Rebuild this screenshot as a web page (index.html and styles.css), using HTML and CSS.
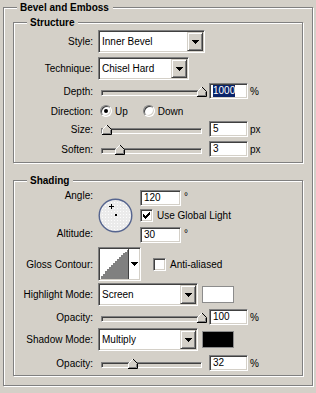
FILE: index.html
```html
<!DOCTYPE html>
<html lang="en">
<head>
    <meta charset="UTF-8">
    <title>Bevel and Emboss</title>
    <link rel="stylesheet" href="styles.css">
</head>
<body>
    <div class="group outer">
        <div class="group-title">Bevel and Emboss</div>

        <div class="group structure">
            <div class="group-title">Structure</div>

            <div class="row style-row">
                <span class="label">Style:</span>
                <div class="combo style-combo">
                    <span class="combo-text">Inner Bevel</span>
                    <span class="combo-btn"><svg width="7" height="4" viewBox="0 0 7 4" shape-rendering="crispEdges"><path d="M0 0h7v1h-1v1h-1v1h-1v1h-1v-1h-1v-1h-1v-1h-1z"/></svg></span>
                </div>
            </div>

            <div class="row technique-row">
                <span class="label">Technique:</span>
                <div class="combo technique-combo">
                    <span class="combo-text">Chisel Hard</span>
                    <span class="combo-btn"><svg width="7" height="4" viewBox="0 0 7 4" shape-rendering="crispEdges"><path d="M0 0h7v1h-1v1h-1v1h-1v1h-1v-1h-1v-1h-1v-1h-1z"/></svg></span>
                </div>
            </div>

            <div class="row slider-row depth-row">
                <span class="label">Depth:</span>
                <div class="slider">
                    <div class="track"></div>
                    <span class="thumb" style="left: 99px"><svg width="10" height="11" viewBox="0 0 10 11"><path d="M0.5 10.5V5.5L5 1L9.5 5.5V10.5Z" fill="#d4d0c8"/><path d="M0.5 10V5.5L5 1" stroke="#fff" fill="none"/><path d="M5 1L9.5 5.5V10.5H0" stroke="#000" fill="none"/><path d="M8.5 6V9.5H1" stroke="#808080" fill="none"/></svg></span>
                </div>
                <div class="field"><span class="selected">1000</span></div>
                <span class="unit">%</span>
            </div>

            <div class="row direction-row">
                <span class="label">Direction:</span>
                <span class="radio checked"></span>
                <span class="radio-text">Up</span>
                <span class="radio down"></span>
                <span class="radio-text">Down</span>
            </div>

            <div class="row slider-row size-row">
                <span class="label">Size:</span>
                <div class="slider">
                    <div class="track"></div>
                    <span class="thumb" style="left: 4px"><svg width="10" height="11" viewBox="0 0 10 11"><path d="M0.5 10.5V5.5L5 1L9.5 5.5V10.5Z" fill="#d4d0c8"/><path d="M0.5 10V5.5L5 1" stroke="#fff" fill="none"/><path d="M5 1L9.5 5.5V10.5H0" stroke="#000" fill="none"/><path d="M8.5 6V9.5H1" stroke="#808080" fill="none"/></svg></span>
                </div>
                <div class="field">5</div>
                <span class="unit">px</span>
            </div>

            <div class="row slider-row soften-row">
                <span class="label">Soften:</span>
                <div class="slider">
                    <div class="track"></div>
                    <span class="thumb" style="left: 17px"><svg width="10" height="11" viewBox="0 0 10 11"><path d="M0.5 10.5V5.5L5 1L9.5 5.5V10.5Z" fill="#d4d0c8"/><path d="M0.5 10V5.5L5 1" stroke="#fff" fill="none"/><path d="M5 1L9.5 5.5V10.5H0" stroke="#000" fill="none"/><path d="M8.5 6V9.5H1" stroke="#808080" fill="none"/></svg></span>
                </div>
                <div class="field">3</div>
                <span class="unit">px</span>
            </div>
        </div>

        <div class="group shading">
            <div class="group-title">Shading</div>

            <div class="angle-block">
                <div class="angle-labels">
                    <span class="label">Angle:</span>
                    <span class="label altitude-label">Altitude:</span>
                </div>
                <div class="dial">
                    <svg width="35" height="35" viewBox="0 0 35 35">
                        <defs>
                            <pattern id="dots" width="3" height="3" patternUnits="userSpaceOnUse">
                                <rect width="3" height="3" fill="#ebebeb"/>
                                <rect x="1" y="1" width="1" height="1" fill="#fdfdfd"/>
                            </pattern>
                        </defs>
                        <circle cx="17.5" cy="17.5" r="16.3" fill="url(#dots)" stroke="#56658f" stroke-width="1.4"/>
                        <path d="M11 8.5h5M13.5 6v5" stroke="#000" stroke-width="1" shape-rendering="crispEdges"/>
                        <rect x="17" y="16" width="2" height="2" fill="#000"/>
                    </svg>
                </div>
                <div class="angle-controls">
                    <div class="field-line">
                        <div class="field angle-field">120</div>
                        <span class="degree">°</span>
                    </div>
                    <div class="check-line global-light">
                        <span class="checkbox"><svg width="7" height="7" viewBox="0 0 7 7" shape-rendering="crispEdges"><path d="M6 0h1v1h-1zM5 1h2v1h-2zM0 2h1v1h-1zM4 2h3v1h-3zM0 3h2v1h-2zM3 3h3v1h-3zM0 4h5v1h-5zM1 5h3v1h-3zM2 6h1v1h-1z"/></svg></span>
                        <span class="check-text">Use Global Light</span>
                    </div>
                    <div class="field-line altitude-line">
                        <div class="field angle-field">30</div>
                        <span class="degree">°</span>
                    </div>
                </div>
            </div>

            <div class="row contour-row">
                <span class="label">Gloss Contour:</span>
                <div class="contour">
                    <span class="contour-preview"><svg width="28" height="30" viewBox="0 0 28 30" shape-rendering="crispEdges"><path d="M1 30V27H3V25H5V22H7V20H9V18H11V16H13V14H15V12H17V10H19V8H21V6H23V4H25V3H27V1H28V30Z" fill="#808080"/></svg></span>
                    <span class="contour-arrow"><svg width="7" height="4" viewBox="0 0 7 4" shape-rendering="crispEdges"><path d="M0 0h7v1h-1v1h-1v1h-1v1h-1v-1h-1v-1h-1v-1h-1z"/></svg></span>
                </div>
                <span class="checkbox anti-box"></span>
                <span class="check-text">Anti-aliased</span>
            </div>

            <div class="row highlight-row">
                <span class="label">Highlight Mode:</span>
                <div class="combo mode-combo">
                    <span class="combo-text">Screen</span>
                    <span class="combo-btn"><svg width="7" height="4" viewBox="0 0 7 4" shape-rendering="crispEdges"><path d="M0 0h7v1h-1v1h-1v1h-1v1h-1v-1h-1v-1h-1v-1h-1z"/></svg></span>
                </div>
                <span class="swatch white"></span>
            </div>

            <div class="row slider-row opacity-row">
                <span class="label">Opacity:</span>
                <div class="slider">
                    <div class="track"></div>
                    <span class="thumb" style="left: 99px"><svg width="10" height="11" viewBox="0 0 10 11"><path d="M0.5 10.5V5.5L5 1L9.5 5.5V10.5Z" fill="#d4d0c8"/><path d="M0.5 10V5.5L5 1" stroke="#fff" fill="none"/><path d="M5 1L9.5 5.5V10.5H0" stroke="#000" fill="none"/><path d="M8.5 6V9.5H1" stroke="#808080" fill="none"/></svg></span>
                </div>
                <div class="field">100</div>
                <span class="unit">%</span>
            </div>

            <div class="row shadow-row">
                <span class="label">Shadow Mode:</span>
                <div class="combo mode-combo">
                    <span class="combo-text">Multiply</span>
                    <span class="combo-btn"><svg width="7" height="4" viewBox="0 0 7 4" shape-rendering="crispEdges"><path d="M0 0h7v1h-1v1h-1v1h-1v1h-1v-1h-1v-1h-1v-1h-1z"/></svg></span>
                </div>
                <span class="swatch black"></span>
            </div>

            <div class="row slider-row opacity-row last">
                <span class="label">Opacity:</span>
                <div class="slider">
                    <div class="track"></div>
                    <span class="thumb" style="left: 30px"><svg width="10" height="11" viewBox="0 0 10 11"><path d="M0.5 10.5V5.5L5 1L9.5 5.5V10.5Z" fill="#d4d0c8"/><path d="M0.5 10V5.5L5 1" stroke="#fff" fill="none"/><path d="M5 1L9.5 5.5V10.5H0" stroke="#000" fill="none"/><path d="M8.5 6V9.5H1" stroke="#808080" fill="none"/></svg></span>
                </div>
                <div class="field">32</div>
                <span class="unit">%</span>
            </div>
        </div>
    </div>
</body>
</html>
```

FILE: styles.css
```css
* {
    box-sizing: border-box;
}

body {
    margin: 0;
    width: 316px;
    height: 393px;
    overflow: hidden;
    background-color: #d4d0c8;
    color: #000;
    font-family: "Liberation Sans", Arial, sans-serif;
    font-size: 10px;
}

/* etched group boxes */
.group {
    border: 1px solid #808080;
    box-shadow: inset 1px 1px 0 #fff, 1px 1px 0 #fff;
}

.group-title {
    width: fit-content;
    height: 12px;
    margin: -6px 0 0 13px;
    padding: 0 4px 0 3px;
    background-color: #d4d0c8;
    font-weight: bold;
    line-height: 12px;
}

.outer {
    width: 310px;
    margin: 7px 0 0 3px;
    padding-bottom: 9px;
}

.structure,
.shading {
    margin: 8px 9px 0 9px;
}

.structure {
    padding-bottom: 5px;
}

.shading {
    margin-top: 17px;
    padding-bottom: 4px;
}

/* rows */
.row {
    display: flex;
    align-items: center;
}

.label {
    flex: none;
    width: 79px;
    text-align: right;
}

.style-row {
    height: 23px;
    margin-top: 1px;
}

.technique-row {
    height: 23px;
    margin-top: 4px;
}

.slider-row {
    height: 16px;
}

.depth-row {
    margin-top: 3px;
}

.direction-row {
    height: 14px;
    margin-top: 5px;
}

.size-row {
    margin-top: 3px;
}

.soften-row {
    margin-top: 4px;
}

/* sunken edge shared by inputs */
.combo,
.field,
.track,
.checkbox,
.contour {
    border: 1px solid;
    border-color: #808080 #fff #fff #808080;
    box-shadow: inset 1px 1px 0 #404040, inset -1px -1px 0 #d4d0c8;
}

.combo {
    display: flex;
    align-items: center;
    flex: none;
    height: 23px;
    margin-left: 5px;
    padding: 1px;
    background-color: #fff;
}

.style-combo {
    width: 107px;
}

.technique-combo {
    width: 91px;
}

.mode-combo {
    width: 100px;
}

.combo-text {
    flex: 1;
    padding-left: 2px;
}

.combo-btn {
    display: flex;
    align-items: center;
    justify-content: center;
    width: 16px;
    height: 100%;
    border: 1px solid;
    border-color: #d4d0c8 #404040 #404040 #d4d0c8;
    box-shadow: inset 1px 1px 0 #fff, inset -1px -1px 0 #808080;
    background-color: #d4d0c8;
}

.combo-btn svg,
.contour-arrow svg {
    display: block;
}

/* sliders */
.slider {
    position: relative;
    flex: none;
    width: 110px;
    height: 16px;
    margin-left: 5px;
}

.track {
    width: 101px;
    height: 6px;
    margin: 7px 0 0 3px;
    background-color: #d4d0c8;
}

.thumb {
    position: absolute;
    top: 3px;
    width: 10px;
    height: 11px;
}

.thumb svg {
    display: block;
}

.field {
    display: flex;
    align-items: center;
    flex: none;
    width: 39px;
    height: 16px;
    margin-left: 1px;
    padding-left: 3px;
    background-color: #fff;
    line-height: 12px;
}

.selected {
    background-color: #0a246a;
    color: #fff;
}

.unit {
    margin-left: 2px;
}

/* radio buttons */
.radio {
    position: relative;
    flex: none;
    width: 12px;
    height: 12px;
    margin-left: 7px;
    border: 1px solid;
    border-color: #808080 #fff #fff #808080;
    border-radius: 50%;
    box-shadow: inset 1px 1px 0 #404040, inset -1px -1px 0 #d4d0c8;
    background-color: #fff;
}

.radio.checked::after {
    content: "";
    position: absolute;
    top: 3px;
    left: 3px;
    width: 4px;
    height: 4px;
    border-radius: 50%;
    background-color: #000;
}

.radio.down {
    margin-left: 15px;
}

.radio-text {
    margin-left: 3px;
}

/* angle / altitude */
.angle-block {
    display: flex;
    margin-top: 3px;
}

.angle-labels {
    display: flex;
    flex-direction: column;
    line-height: 12px;
}

.altitude-label {
    margin-top: 26px;
}

.dial {
    flex: none;
    width: 35px;
    height: 35px;
    margin: 8px 0 0 5px;
}

.dial svg {
    display: block;
}

.angle-controls {
    margin-left: 7px;
}

.field-line,
.check-line {
    display: flex;
    align-items: center;
}

.angle-field {
    width: 41px;
    margin-left: 0;
}

.degree {
    align-self: flex-start;
    margin: 1px 0 0 3px;
}

.global-light {
    height: 13px;
    margin-top: 3px;
}

.altitude-line {
    margin-top: 5px;
}

.checkbox {
    display: flex;
    align-items: center;
    justify-content: center;
    flex: none;
    width: 13px;
    height: 13px;
    background-color: #fff;
}

.checkbox svg {
    display: block;
}

.check-text {
    margin-left: 4px;
}

/* gloss contour */
.contour-row {
    height: 34px;
    margin-top: 4px;
}

.contour {
    display: flex;
    flex: none;
    width: 43px;
    height: 34px;
    margin-left: 5px;
    padding: 1px;
    background-color: #fff;
}

.contour-preview {
    width: 28px;
    height: 30px;
}

.contour-preview svg {
    display: block;
}

.contour-arrow {
    display: flex;
    align-items: center;
    justify-content: center;
    flex: 1;
    border-left: 1px solid #404040;
}

.anti-box {
    margin-left: 12px;
}

/* blend modes */
.highlight-row {
    height: 23px;
    margin-top: 2px;
}

.opacity-row {
    margin-top: 3px;
}

.shadow-row {
    height: 23px;
    margin-top: 3px;
}

.opacity-row.last {
    margin-top: 4px;
}

.swatch {
    flex: none;
    width: 32px;
    height: 17px;
    margin-left: 4px;
    border: 1px solid #8c8c8c;
}

.swatch.white {
    background-color: #fff;
}

.swatch.black {
    background-color: #000;
}
```
